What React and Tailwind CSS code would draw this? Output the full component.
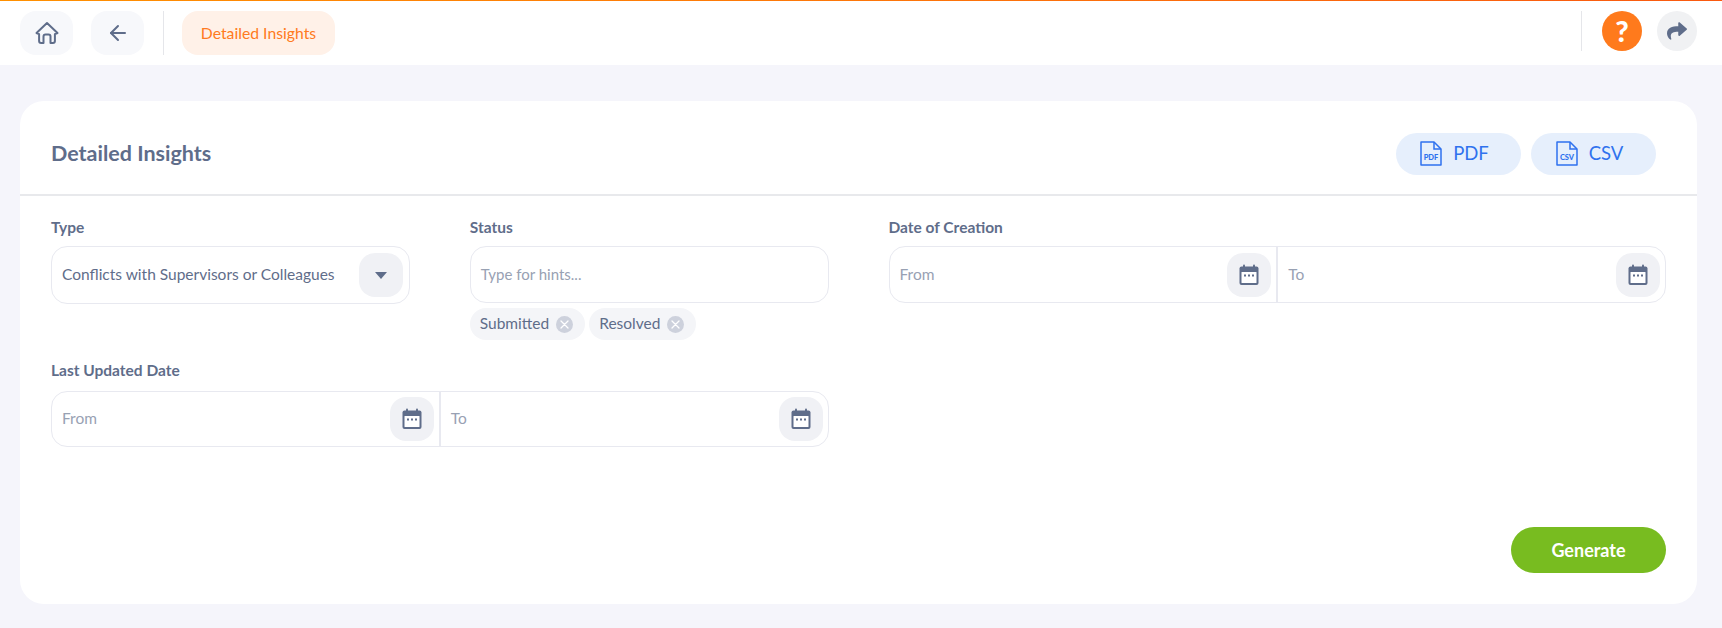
import React from "react";
import { ArrowLeft } from "lucide-react";
import { FaShare } from "react-icons/fa";

const HomeIcon = () => (
  <svg width="24" height="24" viewBox="0 0 24 24" fill="none" stroke="#5f6d8a" strokeWidth="2" strokeLinejoin="round" strokeLinecap="round">
    <path d="M1.5 12 12 2l10.5 10-2.6 1.2V20a2 2 0 0 1-2 2h-2.4v-6.5a2 2 0 0 0-2-2h-3a2 2 0 0 0-2 2V22H6.1a2 2 0 0 1-2-2v-6.8z" />
  </svg>
);

const FileIcon = ({ label }) => (
  <svg width="22" height="25" viewBox="0 0 22 25" fill="none">
    <path d="M1 1h13l7 7v16H1z" stroke="#2f72ee" strokeWidth="1.5" strokeLinejoin="round" />
    <path d="M14 1v7h7" stroke="#2f72ee" strokeWidth="1.5" />
    <text x="11" y="19" textAnchor="middle" fontSize="7.5" fontWeight="900" fill="#2f72ee" fontFamily="Lato, sans-serif">
      {label}
    </text>
  </svg>
);

const CalendarIcon = () => (
  <svg width="22" height="22" viewBox="0 0 22 22" fill="none">
    <rect x="5" y="0.5" width="2" height="4" rx="1" fill="#5f6d8a" />
    <rect x="15" y="0.5" width="2" height="4" rx="1" fill="#5f6d8a" />
    <rect x="1.5" y="2.5" width="19" height="18.5" rx="2" fill="#5f6d8a" />
    <rect x="3.5" y="8" width="15" height="11" rx="0.5" fill="#ffffff" />
    <rect x="6" y="10.5" width="2" height="2" fill="#5f6d8a" />
    <rect x="10" y="10.5" width="2" height="2" fill="#5f6d8a" />
    <rect x="14" y="10.5" width="2" height="2" fill="#5f6d8a" />
  </svg>
);

const NavButton = ({ children }) => (
  <button className="w-[53px] h-11 rounded-2xl bg-[#f7f8fb] flex items-center justify-center">{children}</button>
);

const ExportButton = ({ label }) => (
  <button className="w-[125px] h-[42px] rounded-full bg-[#e6effc] flex items-center justify-center gap-[11px] pr-2 text-[#2f72ee] text-[18.5px]">
    <FileIcon label={label} />
    <span>{label}</span>
  </button>
);

const Label = ({ children }) => (
  <label className="block h-[19px] mb-[10px] text-[15.5px] leading-[21px] font-bold text-[#5f6d8a]">{children}</label>
);

const DateHalf = ({ placeholder, divider }) => (
  <div className={`flex-1 flex items-center justify-between pl-[10px] pr-[5px] ${divider ? "border-r-2 border-[#e8e9f0]" : ""}`}>
    <span className="text-[15.5px] text-[#98a1b3]">{placeholder}</span>
    <span className="w-11 h-11 rounded-2xl bg-[#f0f1f5] flex items-center justify-center">
      <CalendarIcon />
    </span>
  </div>
);

const DateRange = ({ height }) => (
  <div className={`flex ${height} border border-[#e8e9f0] rounded-2xl`}>
    <DateHalf placeholder="From" divider />
    <DateHalf placeholder="To" />
  </div>
);

const Chip = ({ label }) => (
  <span className="h-8 pl-[10px] pr-3 rounded-full bg-[#f4f5f8] flex items-center gap-[7px] text-[15.5px] text-[#5f6d8a]">
    {label}
    <span className="w-[17px] h-[17px] rounded-full bg-[#cdd1dc] flex items-center justify-center">
      <svg width="9" height="9" viewBox="0 0 9 9" stroke="#ffffff" strokeWidth="1.3" strokeLinecap="round">
        <path d="M1 1l7 7M8 1l-7 7" />
      </svg>
    </span>
  </span>
);

const App = () => {
  return (
    <div className="min-h-[628px] bg-[#f5f5fb] font-['Lato',sans-serif]">
      <div className="h-px bg-gradient-to-r from-[#ff9000] to-[#f9590f]" />

      {/* Top bar */}
      <div className="h-[64px] bg-white flex items-start pt-[10px] pl-5 pr-[25px]">
        <NavButton>
          <HomeIcon />
        </NavButton>
        <div className="ml-[18px]">
          <NavButton>
            <ArrowLeft size={24} color="#5f6d8a" strokeWidth={2} />
          </NavButton>
        </div>
        <div className="w-px h-11 bg-[#e5e6ea] ml-[19px] mr-[18px]" />
        <div className="w-[153px] h-11 rounded-2xl bg-[#fff1e8] flex items-center justify-center text-[15.75px] text-[#ff7a21]">
          Detailed Insights
        </div>
        <div className="ml-auto w-px h-10 bg-[#e5e6ea]" />
        <div className="ml-5 w-10 h-10 rounded-full bg-[#ff7a1c] flex items-center justify-center text-white text-[29px] font-black">
          ?
        </div>
        <div className="ml-[15px] w-10 h-10 rounded-full bg-[#f0f1f3] flex items-center justify-center">
          <FaShare size={20} color="#5f6d8a" />
        </div>
      </div>

      {/* Card */}
      <div className="ml-5 mr-[25px] mt-9 h-[503px] bg-white rounded-3xl flex flex-col">
        <div className="h-[95px] shrink-0 border-b-2 border-[#e8e9ec] flex items-center pl-[31px] pr-[41px] pt-3">
          <h1 className="text-[21.5px] font-bold text-[#5f6d8a]">Detailed Insights</h1>
          <div className="ml-auto flex gap-[10px]">
            <ExportButton label="PDF" />
            <ExportButton label="CSV" />
          </div>
        </div>

        <div className="flex-1 flex flex-col pt-[21px] pl-[31px] pr-[31px] pb-[31px]">
          <div className="grid grid-cols-4 gap-x-[60px]">
            <div>
              <Label>Type</Label>
              <div className="h-[58px] border border-[#e8e9f0] rounded-2xl flex items-center justify-between pl-[10px] pr-[6px]">
                <span className="text-[15.5px] text-[#5f6d8a]">Conflicts with Supervisors or Colleagues</span>
                <span className="w-11 h-11 rounded-2xl bg-[#f0f1f5] flex items-center justify-center">
                  <svg width="12" height="7" viewBox="0 0 12 7">
                    <path d="M0 0h12L6 7z" fill="#5f6d8a" />
                  </svg>
                </span>
              </div>
            </div>

            <div>
              <Label>Status</Label>
              <div className="h-[57px] border border-[#e8e9f0] rounded-2xl flex items-center px-[10px] text-[15px] text-[#98a1b3]">
                Type for hints...
              </div>
              <div className="flex gap-1 mt-[5px]">
                <Chip label="Submitted" />
                <Chip label="Resolved" />
              </div>
            </div>

            <div className="col-span-2">
              <Label>Date of Creation</Label>
              <DateRange height="h-[57px]" />
            </div>

            <div className="col-span-2 row-start-2 mt-5">
              <Label>Last Updated Date</Label>
              <div className="mt-[12px]">
                <DateRange height="h-[56px]" />
              </div>
            </div>
          </div>

          <div className="mt-auto flex justify-end">
            <button className="w-[155px] h-[46px] rounded-full bg-[#78bc20] text-white text-[18px] font-bold">
              Generate
            </button>
          </div>
        </div>
      </div>
    </div>
  );
};

export default App;
